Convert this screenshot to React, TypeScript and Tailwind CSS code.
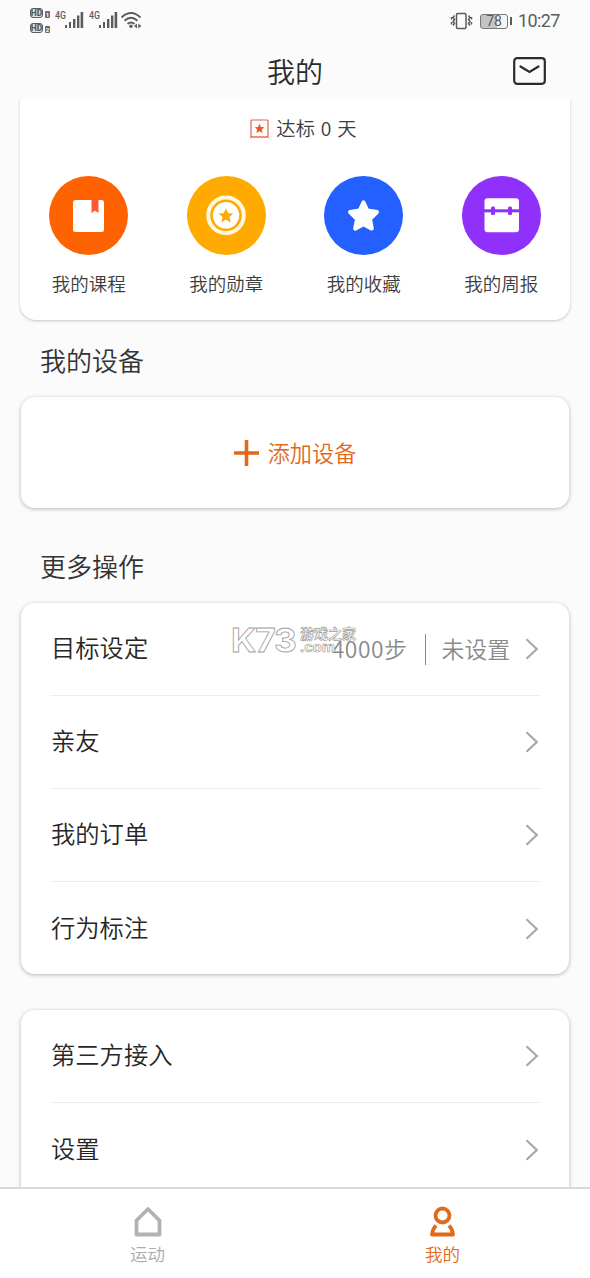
import React from "react";

const STAR =
  "M0 -10 L2.9 -3.4 L9.8 -3 L4.5 1.7 L6.2 8.8 L0 5 L-6.2 8.8 L-4.5 1.7 L-9.8 -3 L-2.9 -3.4 Z";

function Signal() {
  return (
    <div className="flex h-[22px] gap-px">
      <span className="-mt-[5px] h-[12px] w-[9px] origin-left scale-x-[0.8] font-[Roboto] text-[11px] leading-[20px] font-medium">
        4G
      </span>
      <svg width="19" height="18" viewBox="0 0 19 18" fill="currentColor">
        <rect x="0" y="14" width="2" height="3" />
        <rect x="4" y="11" width="2" height="6" />
        <rect x="8" y="8" width="2.4" height="9" />
        <rect x="12" y="4.5" width="2.4" height="12.5" />
        <rect x="15.6" y="1" width="2.6" height="16" />
      </svg>
    </div>
  );
}

function HdBadge({ sim }: { sim: string }) {
  return (
    <div className="flex h-[10px] items-end gap-[2px] font-[Roboto]">
      <span className="flex h-[10px] w-[13px] items-center justify-center rounded-[3px] border border-[#5c5c5c] bg-[#e4e4e4] text-[8.5px] leading-none font-black">
        HD
      </span>
      <span className="flex h-[7px] w-[5px] items-center justify-center rounded-[1px] bg-[#6c6c6c] text-[6px] leading-none font-bold text-white">
        {sim}
      </span>
    </div>
  );
}

function StatusBar() {
  return (
    <div className="flex h-[42px] items-start justify-between pl-[30px] pr-[31px] text-[#5c5c5c]">
      <div className="flex pt-[8px]">
        <div className="flex w-[25px] flex-col gap-[5px]">
          <HdBadge sim="1" />
          <HdBadge sim="2" />
        </div>
        <div className="flex gap-[5px] pt-[3px]">
          <Signal />
          <Signal />
        </div>
        <svg
          className="ml-[3px] mt-[3px]"
          width="22"
          height="18"
          viewBox="0 0 22 18"
          fill="none"
          stroke="currentColor"
          strokeWidth="1.9"
        >
          <path d="M.5 6.5Q10 -2.5 19.5 6.5M3.5 9.800Q10 3.800 16.5 9.800M6.5 13Q10 9.800 13.5 13" />
          <circle cx="10" cy="15.3" r="1.7" fill="currentColor" stroke="none" />
          <path
            d="M16 12.5v5l-3 -2.5zM17.3 12.5v5l3 -2.5z"
            fill="currentColor"
            stroke="none"
          />
        </svg>
      </div>
      <div className="flex h-[42px] items-center">
        <svg
          width="23"
          height="18"
          viewBox="0 0 23 18"
          fill="none"
          stroke="currentColor"
          strokeWidth="1.5"
        >
          <rect x="6.5" y="1.5" width="9.5" height="15" rx="1.2" />
          <path d="M4.5 3.5l-1.5 2 1.5 2-1.5 2 1.5 2-1.5 2M1.5 5v2.5M1.5 10v2.5M18.5 3.5l1.5 2-1.5 2 1.5 2-1.5 2 1.5 2M21.5 5v2.5M21.5 10v2.5" />
        </svg>
        <div className="ml-[7px] flex h-[15px] w-[28px] items-center justify-center rounded-[3px] border border-[#777] bg-linear-to-r from-[#c4c4c4] from-60% to-[#f4f4f4] to-60% font-[Roboto] text-[14px] leading-none font-normal">
          78
        </div>
        <div className="ml-[2px] h-[8px] w-[2px] bg-[#5c5c5c]" />
        <span className="ml-[6px] w-[41px] whitespace-nowrap font-[Roboto] text-[18px] leading-none font-normal tracking-[-0.6px]">
          10:27
        </span>
      </div>
    </div>
  );
}

function Header() {
  return (
    <header className="relative z-10 h-[100px] shrink-0 bg-[#fbfbfb]">
      <StatusBar />
      <div className="grid h-[58px] grid-cols-[1fr_auto_1fr] items-center">
        <span />
        <h1 className="-mt-[1px] text-[28px] leading-none text-[#2b2b2b]">我的</h1>
        <svg
          className="mr-[44px] justify-self-end"
          width="33"
          height="28"
          viewBox="0 0 33 28"
          fill="none"
          stroke="#2b2b2b"
          strokeWidth="2.2"
        >
          <rect x="1.2" y="1.2" width="30.6" height="25.6" rx="3" />
          <path d="M7.5 9.5l9 5.5 9-5.5" strokeLinecap="round" />
        </svg>
      </div>
    </header>
  );
}

function CourseIcon() {
  return (
    <svg width="79" height="79" viewBox="0 0 79 79">
      <rect x="24" y="24" width="31" height="32" rx="2.5" fill="#fff" />
      <path d="M42.5 24h7v13l-3.5-2.2-3.5 2.2z" fill="#ff5a35" />
    </svg>
  );
}

function MedalIcon() {
  return (
    <svg width="79" height="79" viewBox="0 0 79 79">
      <circle cx="39" cy="39.3" r="17.8" fill="none" stroke="#fff8dc" strokeWidth="4" />
      <circle cx="39" cy="39.3" r="13.2" fill="#fff" />
      <path d={STAR} transform="translate(39 39.8) scale(.76)" fill="#ffaa00" />
    </svg>
  );
}

function FavoriteIcon() {
  return (
    <svg width="79" height="79" viewBox="0 0 79 79">
      <path
        d="M39.5 26.3L43.3 34.5L53 36L46 43L47.8 52.6L39.5 48.3L31.2 52.6L33 43L26 36L35.7 34.5Z"
        fill="#fff"
        stroke="#fff"
        strokeWidth="4"
        strokeLinejoin="round"
      />
    </svg>
  );
}

function ReportIcon() {
  return (
    <svg width="79" height="79" viewBox="0 0 79 79">
      <rect x="22.5" y="22.3" width="34.5" height="34" rx="3" fill="#fff" />
      <g fill="#9030fb">
        <rect x="22" y="33.3" width="36" height="3" />
        <rect x="29" y="30.5" width="4" height="8.5" rx="1.5" />
        <rect x="46" y="30.5" width="4" height="8.5" rx="1.5" />
      </g>
    </svg>
  );
}

const shortcuts = [
  { label: "我的课程", color: "bg-[#ff6200]", icon: <CourseIcon /> },
  { label: "我的勋章", color: "bg-[#ffaa00]", icon: <MedalIcon /> },
  { label: "我的收藏", color: "bg-[#2360ff]", icon: <FavoriteIcon /> },
  { label: "我的周报", color: "bg-[#9030fb]", icon: <ReportIcon /> },
];

function SummaryCard() {
  return (
    <section className="-mx-px -mt-[20px] h-[240px] rounded-[16px] bg-white pt-[37px] shadow-[0_1px_3px_rgba(0,0,0,0.22)]">
      <div className="flex h-[24px] items-center justify-center pl-[17px] text-[19.3px] leading-none tracking-[0.3px] text-[#3c3c3c] [word-spacing:0.8px]">
        <svg className="-mt-px mr-[7px]" width="19" height="20" viewBox="0 0 19 20">
          <path
            d="M1 18.5V2Q1 1 2 1H17Q18 1 18 2V18.5L16.3 17.5L14.6 18.5L12.9 17.5L11.2 18.5L9.5 17.5L7.8 18.5L6.1 17.5L4.4 18.5L2.7 17.5Z"
            fill="none"
            stroke="#e4654a"
            strokeWidth="1.2"
          />
          <path d={STAR} transform="translate(9.5 9.7) scale(.5)" fill="#ee5a18" />
        </svg>
        达标 0 天
      </div>
      <div className="mt-[35px] grid grid-cols-4">
        {shortcuts.map((item) => (
          <div className="flex flex-col items-center" key={item.label}>
            <div className={`size-[79px] rounded-full ${item.color}`}>{item.icon}</div>
            <span className="mt-[18px] text-[18.5px] leading-[20px] text-[#3c3c3c]">
              {item.label}
            </span>
          </div>
        ))}
      </div>
    </section>
  );
}

function Chevron() {
  return (
    <svg
      width="14"
      height="22"
      viewBox="0 0 14 22"
      fill="none"
      stroke="#a8a8a8"
      strokeWidth="2.2"
    >
      <path d="M1.5 1.2L11.8 11L1.5 20.8" />
    </svg>
  );
}

function Watermark() {
  return (
    <svg
      className="absolute left-[205px] top-[20px] overflow-visible"
      width="137"
      height="36"
      viewBox="-5 0 137 36"
      fill="#fff"
      stroke="#a0a0a0"
      strokeWidth="0.8"
    >
      <text
        transform="translate(0 28.5) scale(1.1 1)"
        fontFamily="Inter, sans-serif"
        fontSize="32"
        fontWeight="700"
        letterSpacing="-1"
      >
        K73
      </text>
      <text
        x="69"
        y="16"
        fontFamily="Noto Sans CJK SC, sans-serif"
        fontSize="14"
        fontWeight="700"
        strokeWidth="0.7"
      >
        游戏之家
      </text>
      <text
        x="69"
        y="28.5"
        fontFamily="Liberation Sans, sans-serif"
        fontSize="15"
        fontWeight="700"
        strokeWidth="0.7"
      >
        .com
      </text>
    </svg>
  );
}

type Row_Props = {
  label: string;
  children?: React.ReactNode;
};

function Row({ label, children }: Row_Props) {
  return (
    <div className="mx-[29px] flex h-[93px] items-center justify-between border-b border-[#ededed] pl-px pr-px last:border-b-0">
      <span className="-mt-[3px] text-[24.3px] leading-none text-[#262626]">{label}</span>
      <div className="flex items-center">
        {children}
        <Chevron />
      </div>
    </div>
  );
}

function TabBar() {
  return (
    <nav className="relative z-10 grid h-[91px] shrink-0 grid-cols-2 border-t-2 border-[#d9d9d9] bg-white text-[17.5px] leading-none">
      <div className="flex flex-col items-center pt-[17px] text-[#acacac]">
        <svg
          width="30"
          height="32"
          viewBox="0 0 30 32"
          fill="none"
          stroke="#b2b2b2"
          strokeWidth="3.8"
          strokeLinejoin="round"
        >
          <path d="M15 3L26.5 14.5V28.5H3.5V14.5Z" />
        </svg>
        <span className="mt-[7px]">运动</span>
      </div>
      <div className="flex flex-col items-center pt-[17px] text-[#e06a1b]">
        <svg
          width="30"
          height="32"
          viewBox="0 0 30 32"
          fill="none"
          stroke="currentColor"
          strokeWidth="3.8"
        >
          <circle cx="14.5" cy="9.5" r="7" />
          <path d="M8 19.5Q4.500 23 4 28.5H25Q24.500 23 21 19.5" strokeLinejoin="round" />
        </svg>
        <span className="mt-[7px]">我的</span>
      </div>
    </nav>
  );
}

const cardShadow = "shadow-[0_1px_4px_rgba(0,0,0,0.28)]";

function App() {
  return (
    <div className="flex h-[1278px] w-[590px] flex-col overflow-hidden bg-[#fbfbfb] font-['Noto_Sans_CJK_SC',sans-serif] font-[350]">
      <Header />
      <main className="min-h-0 flex-1 px-[21px]">
        <SummaryCard />
        <h2 className="flex h-[77px] items-center pl-[19px] pt-[3px] text-[26px] leading-none text-[#333]">
          我的设备
        </h2>
        <section
          className={`flex h-[111px] items-center justify-center gap-[9px] rounded-[14px] bg-white text-[22.2px] leading-none text-[#e06a1b] ${cardShadow}`}
        >
          <svg width="25" height="26" viewBox="0 0 25 26" stroke="currentColor" strokeWidth="3.6">
            <path d="M12.5 0V26M0 13H25" />
          </svg>
          <span>添加设备</span>
        </section>
        <h2 className="flex h-[95px] items-center pl-[19px] pt-[20px] text-[26px] leading-none text-[#333]">
          更多操作
        </h2>
        <section className={`relative h-[371px] rounded-[14px] bg-white ${cardShadow}`}>
          <div>
            <Row label="目标设定">
              <div className="mr-[15px] flex items-center text-[22.8px] leading-none text-[#8a8a8a]">
                <span className="tracking-[0.6px]">4000步</span>
                <span className="ml-[17px] mr-[16px] h-[31px] w-px bg-[#8a8a8a]" />
                <span>未设置</span>
              </div>
            </Row>
            <Row label="亲友" />
            <Row label="我的订单" />
            <Row label="行为标注" />
          </div>
          <Watermark />
        </section>
        <section className={`mt-[36px] h-[200px] rounded-[14px] bg-white ${cardShadow}`}>
          <Row label="第三方接入" />
          <Row label="设置" />
        </section>
      </main>
      <TabBar />
    </div>
  );
}

export default App;
